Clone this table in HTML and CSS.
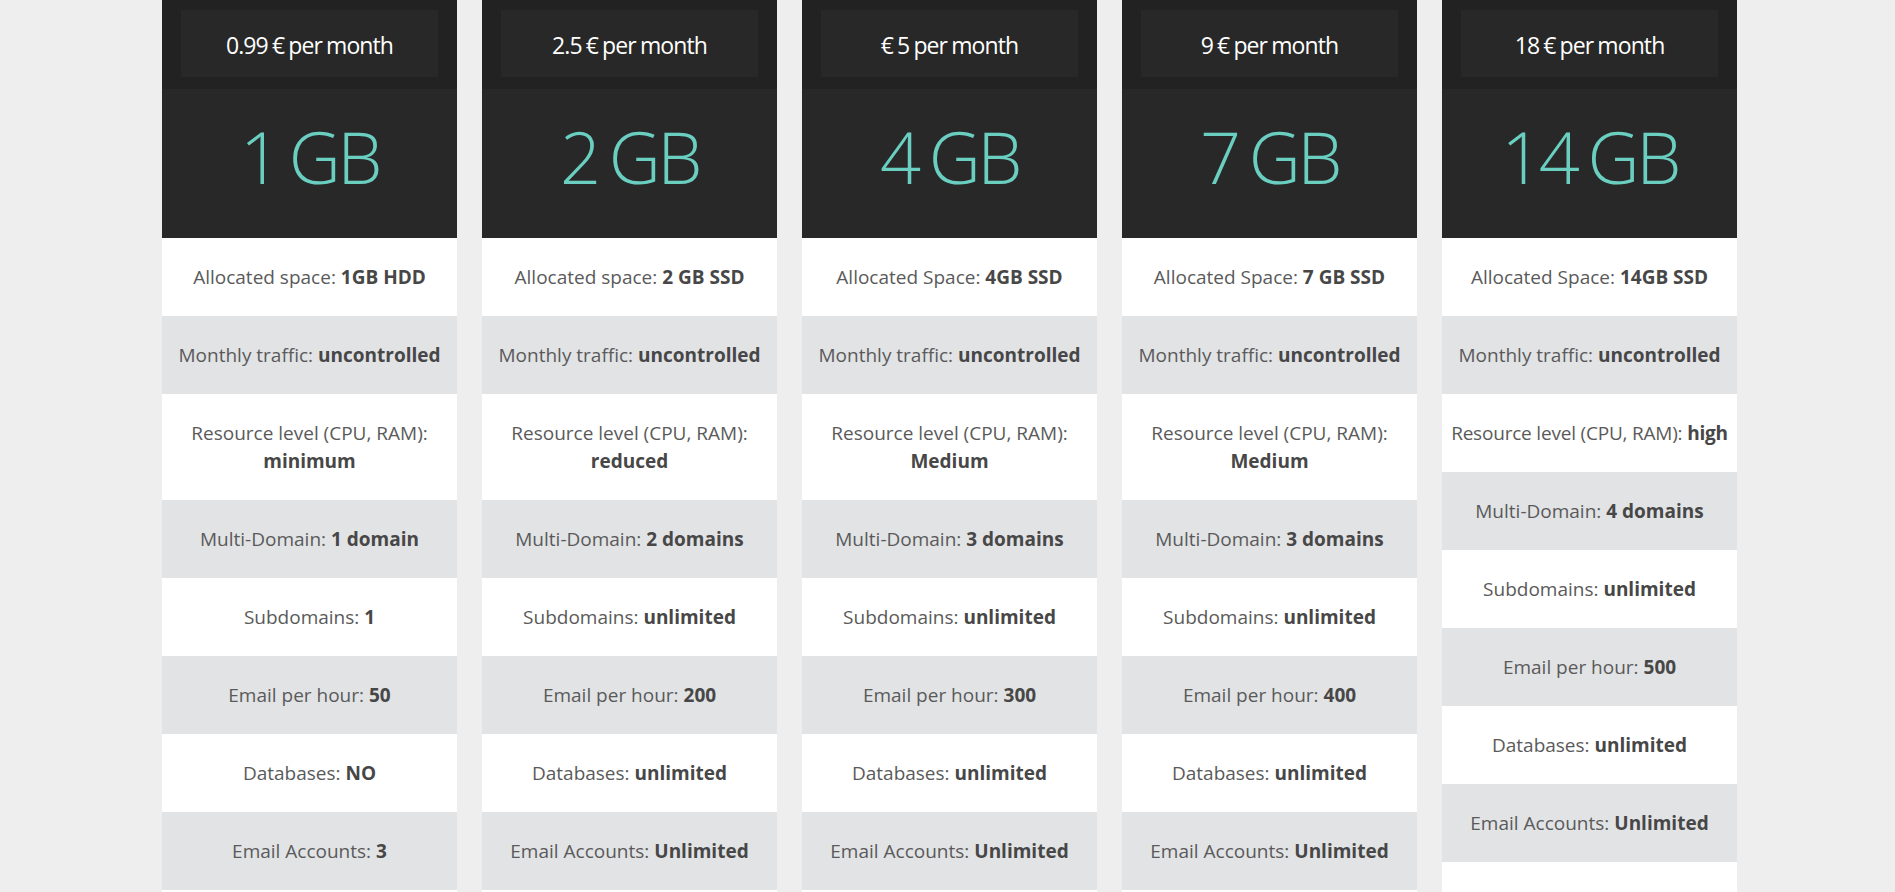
FILE: index.html
```html
<!DOCTYPE html>
<html lang="en">
<head>
<meta charset="utf-8">
<title>Hosting plans</title>
<link rel="stylesheet" href="styles.css">
</head>
<body>
<div class="plans">
  <div class="plan">
    <div class="plan-top"><div class="price">0.99 € per month</div></div>
    <div class="size">1 GB</div>
    <ul class="features">
      <li>Allocated space: <b>1GB HDD</b></li>
      <li>Monthly traffic: <b>uncontrolled</b></li>
      <li>Resource level (CPU, RAM): <b>minimum</b></li>
      <li>Multi-Domain: <b>1 domain</b></li>
      <li>Subdomains: <b>1</b></li>
      <li>Email per hour: <b>50</b></li>
      <li>Databases: <b>NO</b></li>
      <li>Email Accounts: <b>3</b></li>
    </ul>
  </div>
  <div class="plan">
    <div class="plan-top"><div class="price">2.5 € per month</div></div>
    <div class="size">2 GB</div>
    <ul class="features">
      <li>Allocated space: <b>2 GB SSD</b></li>
      <li>Monthly traffic: <b>uncontrolled</b></li>
      <li>Resource level (CPU, RAM): <b>reduced</b></li>
      <li>Multi-Domain: <b>2 domains</b></li>
      <li>Subdomains: <b>unlimited</b></li>
      <li>Email per hour: <b>200</b></li>
      <li>Databases: <b>unlimited</b></li>
      <li>Email Accounts: <b>Unlimited</b></li>
    </ul>
  </div>
  <div class="plan">
    <div class="plan-top"><div class="price">€ 5 per month</div></div>
    <div class="size">4 GB</div>
    <ul class="features">
      <li>Allocated Space: <b>4GB SSD</b></li>
      <li>Monthly traffic: <b>uncontrolled</b></li>
      <li>Resource level (CPU, RAM): <b>Medium</b></li>
      <li>Multi-Domain: <b>3 domains</b></li>
      <li>Subdomains: <b>unlimited</b></li>
      <li>Email per hour: <b>300</b></li>
      <li>Databases: <b>unlimited</b></li>
      <li>Email Accounts: <b>Unlimited</b></li>
    </ul>
  </div>
  <div class="plan">
    <div class="plan-top"><div class="price">9 € per month</div></div>
    <div class="size">7 GB</div>
    <ul class="features">
      <li>Allocated Space: <b>7 GB SSD</b></li>
      <li>Monthly traffic: <b>uncontrolled</b></li>
      <li>Resource level (CPU, RAM): <b>Medium</b></li>
      <li>Multi-Domain: <b>3 domains</b></li>
      <li>Subdomains: <b>unlimited</b></li>
      <li>Email per hour: <b>400</b></li>
      <li>Databases: <b>unlimited</b></li>
      <li>Email Accounts: <b>Unlimited</b></li>
    </ul>
  </div>
  <div class="plan">
    <div class="plan-top"><div class="price">18 € per month</div></div>
    <div class="size">14 GB</div>
    <ul class="features">
      <li>Allocated Space: <b>14GB SSD</b></li>
      <li>Monthly traffic: <b>uncontrolled</b></li>
      <li class="wide">Resource level (CPU, RAM): <b>high</b></li>
      <li>Multi-Domain: <b>4 domains</b></li>
      <li>Subdomains: <b>unlimited</b></li>
      <li>Email per hour: <b>500</b></li>
      <li>Databases: <b>unlimited</b></li>
      <li>Email Accounts: <b>Unlimited</b></li>
    </ul>
  </div>
</div>
</body>
</html>
```

FILE: styles.css
```css
html, body {
  margin: 0;
  padding: 0;
  height: 100%;
  overflow: hidden;
}
body {
  background: #eeeeee;
  font-family: "Open Sans", "Noto Sans", sans-serif;
  color: #5a5a5a;
}
.plans {
  display: flex;
  align-items: stretch;
  gap: 25px;
  padding-left: 162px;
  height: 100%;
}
.plan {
  width: 295px;
  flex: 0 0 295px;
  background: #ffffff;
}
.plan-top {
  background: #222222;
  padding: 10px 19px 12px;
}
.price {
  background: #282828;
  height: 67px;
  padding-top: 3px;
  box-sizing: border-box;
  display: flex;
  align-items: center;
  justify-content: center;
  color: #ffffff;
  font-size: 23px;
  letter-spacing: -0.9px;
  word-spacing: -1px;
  font-weight: 400;
}
.size {
  background: #282828;
  height: 149px;
  display: flex;
  align-items: center;
  justify-content: center;
  color: #6acfc0;
  font-size: 72px;
  font-weight: 300;
  letter-spacing: -3.5px;
  word-spacing: -4px;
  padding-bottom: 16px;
  box-sizing: border-box;
}
.features {
  list-style: none;
  margin: 0;
  padding: 0;
}
.features li {
  padding: 25px 8px;
  line-height: 28px;
  font-size: 19px;
  text-align: center;
}
.features li:nth-child(even) {
  background: #e2e3e5;
}
.features li.wide {
  padding-left: 0;
  padding-right: 0;
  white-space: nowrap;
  letter-spacing: -0.2px;
}
.features b {
  font-weight: 700;
  color: #474747;
}
```
